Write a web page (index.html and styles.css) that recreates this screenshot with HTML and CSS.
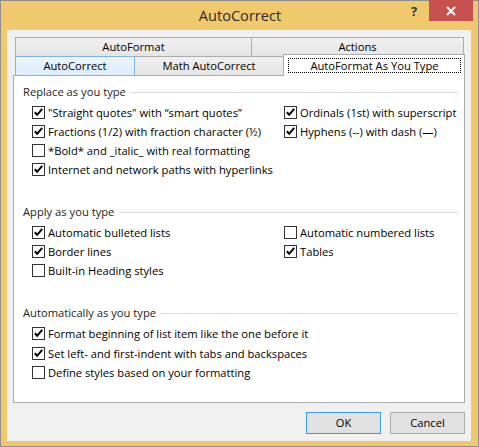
FILE: index.html
```html
<!DOCTYPE html>
<html>
<head>
<meta charset="utf-8">
<link rel="stylesheet" href="styles.css">
</head>
<body>
<div class="window">
  <div class="titlebar">
    <div class="title">AutoCorrect</div>
    <div class="help">?</div>
    <div class="close"><svg width="12" height="12" viewBox="0 0 12 12"><path d="M2 2 L10 10 M10 2 L2 10" stroke="#fff" stroke-width="2" fill="none"/></svg></div>
  </div>
  <div class="client">
    <div class="tabs">
      <div class="tabrow">
        <div class="tab t-autoformat">AutoFormat</div>
        <div class="tab t-actions">Actions</div>
      </div>
      <div class="tabrow row2">
        <div class="tab t-autocorrect">AutoCorrect</div>
        <div class="tab t-math">Math AutoCorrect</div>
        <div class="tab t-selected"><span class="focus">AutoFormat As You Type</span></div>
      </div>
    </div>
    <div class="panel">
      <div class="section">
        <div class="legend"><span>Replace as you type</span><i></i></div>
        <div class="grid">
          <label class="cb on"><b></b>"Straight quotes" with “smart quotes”</label>
          <label class="cb on"><b></b>Ordinals (1st) with superscript</label>
          <label class="cb on"><b></b>Fractions (1/2) with fraction character (½)</label>
          <label class="cb on"><b></b>Hyphens (--) with dash (—)</label>
          <label class="cb"><b></b>*Bold* and _italic_ with real formatting</label>
          <span></span>
          <label class="cb on"><b></b>Internet and network paths with hyperlinks</label>
          <span></span>
        </div>
      </div>
      <div class="section">
        <div class="legend"><span>Apply as you type</span><i></i></div>
        <div class="grid">
          <label class="cb on"><b></b>Automatic bulleted lists</label>
          <label class="cb"><b></b>Automatic numbered lists</label>
          <label class="cb on"><b></b>Border lines</label>
          <label class="cb on"><b></b>Tables</label>
          <label class="cb"><b></b>Built-in Heading styles</label>
          <span></span>
        </div>
      </div>
      <div class="section">
        <div class="legend"><span>Automatically as you type</span><i></i></div>
        <div class="list">
          <label class="cb on"><b></b>Format beginning of list item like the one before it</label>
          <label class="cb on"><b></b>Set left- and first-indent with tabs and backspaces</label>
          <label class="cb"><b></b>Define styles based on your formatting</label>
        </div>
      </div>
    </div>
    <div class="buttons">
      <div class="btn default">OK</div>
      <div class="btn">Cancel</div>
    </div>
  </div>
</div>
</body>
</html>
```
FILE: styles.css
```css
* { box-sizing: border-box; }
html, body { margin: 0; padding: 0; }
body {
  width: 479px; height: 447px; overflow: hidden;
  font-family: "Open Sans", "Noto Sans", sans-serif;
  font-size: 11.2px; color: #000;
}
.window {
  width: 479px; height: 447px;
  border: 1px solid #8f8f8f;
  background: #f0c96c;
}
.titlebar { height: 29px; position: relative; }
.title {
  text-align: center; font-size: 14.6px; line-height: 28px; color: #2b2b2b;
  padding-left: 1px;
}
.help {
  position: absolute; left: 410px; top: 2px;
  font-size: 13px; font-weight: bold; color: #333; line-height: 16px;
}
.close {
  position: absolute; left: 428px; top: -1px; width: 44px; height: 21px;
  background: #c75050;
  display: flex; align-items: center; justify-content: center;
}
.client {
  margin: 0 7px 0 6px; height: 411px; background: #f0f0f0;
  padding-top: 7px;
}
.tabs { height: 39px; margin: 0 0 -1px 8px; }
.tabrow { display: flex; align-items: flex-start; height: 20px; }
.row2 { margin-top: -1px; }
.tab {
  height: 20px; border: 1px solid #acacac;
  background: linear-gradient(#f0f0f0, #e5e5e5);
  text-align: center; line-height: 18px;
}
.tab + .tab { margin-left: -1px; }
.t-autoformat { width: 237px; }
.t-actions { width: 213px; }
.t-autocorrect { width: 120px; border-color: #7eb4ea; background: linear-gradient(#ecf4fc, #dcecfc); position: relative; z-index: 1; }
.t-math { width: 150px; }
.t-selected {
  width: 182px; height: 22px; margin-top: -2px; background: #fff;
  border-bottom: none; position: relative; z-index: 2;
  padding: 3px 3px 0 4px;
}
.focus {
  display: block; height: 15px; border: 1px dotted #000;
  line-height: 13px;
}
.panel {
  margin-left: 6px; width: 452px; height: 328px;
  background: #fff; border: 1px solid #acacac;
  position: relative; z-index: 0;
  padding: 6px 6px 0 9px;
}
.section { margin-bottom: 23px; }
.legend { display: flex; align-items: center; height: 19px; line-height: 19px; color: #1e1e1e; }
.legend i { flex: 1; height: 1px; background: #dcdcdc; margin-left: 5px; margin-top: 1px; }
.grid {
  display: grid; grid-template-columns: 252px 1fr;
  margin-top: 2px; padding-left: 9px;
}
.list { margin-top: 2px; padding-left: 9px; }
.list .cb { height: 19.5px; }
.cb {
  display: flex; align-items: center; height: 19px; white-space: nowrap; color: #000;
}
.cb b {
  width: 13px; height: 13px; border: 1px solid #333; background: #fff;
  margin-right: 3px; flex: none;
}
.cb.on b {
  background: #fff url("data:image/svg+xml;utf8,<svg xmlns='http://www.w3.org/2000/svg' width='11' height='11' viewBox='0 0 11 11'><path d='M1.8 5.2 L4.2 7.8 L9.2 1.8' stroke='black' stroke-width='2' fill='none'/></svg>") no-repeat center;
}
.buttons {
  display: flex; justify-content: flex-end; gap: 9px;
  margin-top: 9px; padding-right: 6px;
}
.btn {
  width: 75px; height: 22px; border: 1px solid #adadad; background: #e1e1e1;
  text-align: center; line-height: 20px;
}
.btn.default { border-color: #3c9be8; }
```
